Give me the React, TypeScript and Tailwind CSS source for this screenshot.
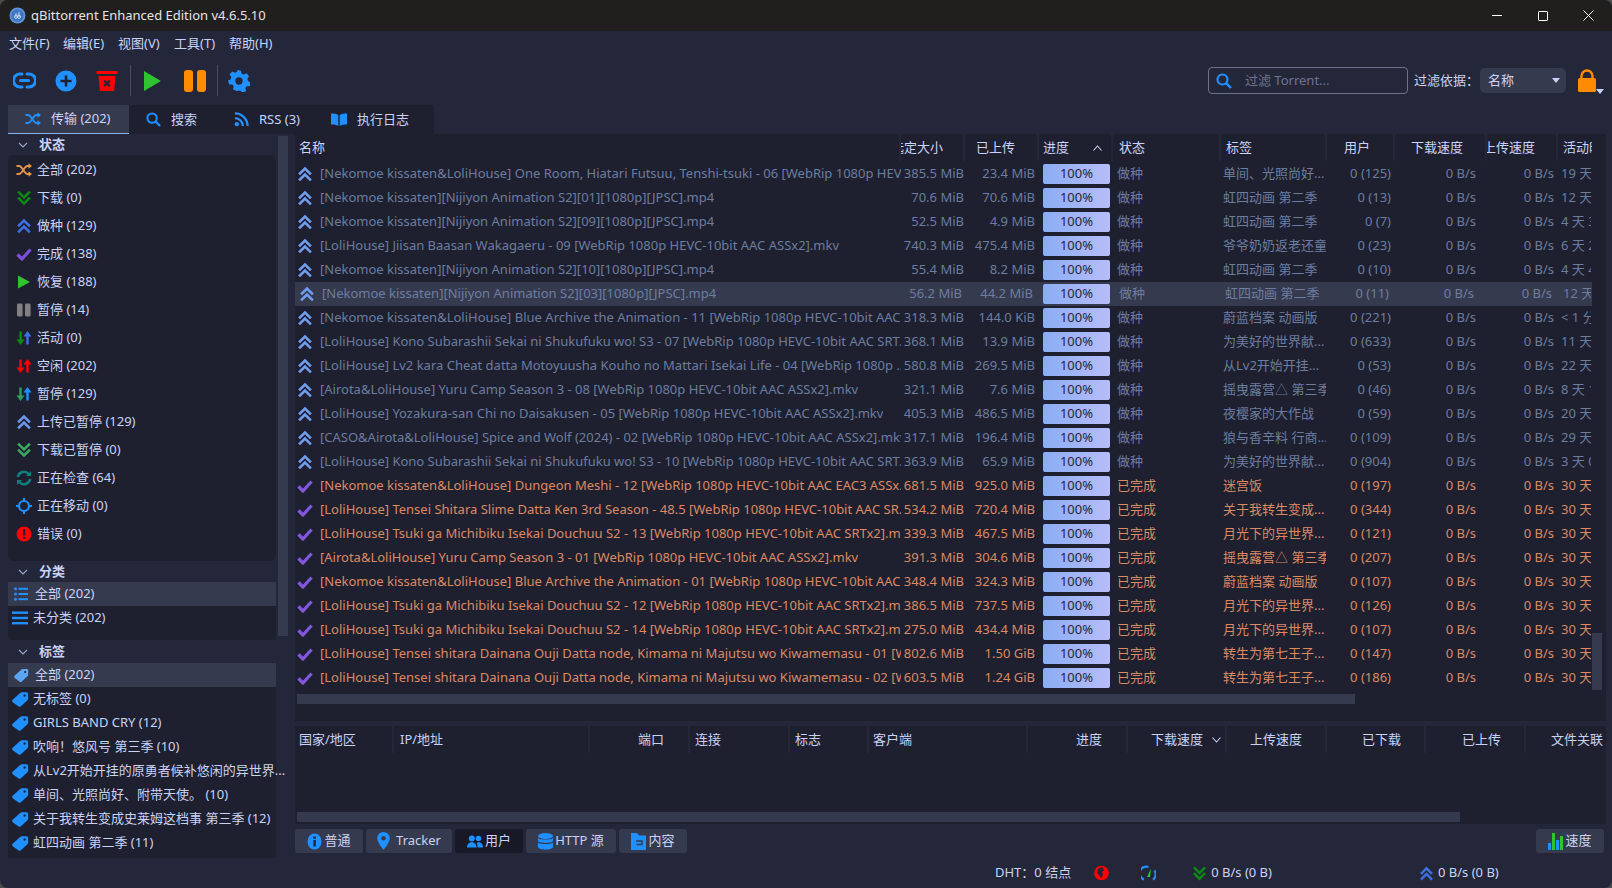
import React from "react";

const fontStack = "font-['Noto_Sans','Noto_Sans_CJK_SC',sans-serif]";

function DoubleChevron({ up, color, size = 16 }: { up?: boolean; color: string; size?: number }) {
  return (
    <svg width={size} height={size} viewBox="0 0 16 16" className="shrink-0">
      <g fill="none" stroke={color} strokeWidth="2.6" strokeLinecap="square" transform={up ? undefined : "rotate(180 8 8)"}>
        <path d="M3 7.5 8 2.5l5 5" />
        <path d="M3 13.5 8 8.5l5 5" />
      </g>
    </svg>
  );
}

function Check({ color = "#7c4fd6", size = 16 }: { color?: string; size?: number }) {
  return (
    <svg width={size} height={size} viewBox="0 0 16 16" className="shrink-0">
      <path d="M1.5 8.5 6 13 14.5 3.5" fill="none" stroke={color} strokeWidth="3.2" strokeLinejoin="round" />
    </svg>
  );
}

function Shuffle({ color, size = 16 }: { color: string; size?: number }) {
  return (
    <svg width={size} height={size} viewBox="0 0 16 16" className="shrink-0">
      <g fill="none" stroke={color} strokeWidth="1.8">
        <path d="M0.5 4h2.5c3.5 0 5 8 8.5 8H13" />
        <path d="M0.5 12h2.5c3.5 0 5-8 8.5-8H13" />
      </g>
      <path d="M12.5 1.2 16 4l-3.5 2.8zM12.5 9.2 16 12l-3.5 2.8z" fill={color} />
    </svg>
  );
}

function UpDown({ down, up }: { down: string; up: string }) {
  return (
    <svg width={16} height={16} viewBox="0 0 16 16" className="shrink-0">
      <path d="M4.5 1.5v11" stroke={down} strokeWidth="2.4" />
      <path d="M0.5 9.5h8L4.5 15z" fill={down} />
      <path d="M11.5 14.5V3.5" stroke={up} strokeWidth="2.4" />
      <path d="M7.5 6.5h8L11.5 1z" fill={up} />
    </svg>
  );
}

function Tag({ size = 17, color = "#2090ff" }: { size?: number; color?: string }) {
  return (
    <svg width={size} height={size} viewBox="0 0 17 17" className="shrink-0">
      <path d="M0.7 8.8 8.4 1.7a2 2 0 0 1 1.4-.5h4.7a1.6 1.6 0 0 1 1.6 1.6v5c0 .6-.2 1-.6 1.4l-6.6 6a2 2 0 0 1-2.7 0L.7 11.2a1.7 1.7 0 0 1 0-2.4z" fill={color} />
      <circle cx="12.6" cy="4.6" r="1.2" fill="#1e2030" />
    </svg>
  );
}

function ListIco({ wide }: { wide?: boolean }) {
  return (
    <svg width={wide ? 16 : 14} height={14} viewBox={wide ? "0 0 16 14" : "0 0 14 14"} className="shrink-0">
      {wide ? (
        <g fill="#2090ff">
          <rect x="0" y="0.5" width="16" height="2.4" />
          <rect x="0" y="5.8" width="16" height="2.4" />
          <rect x="0" y="11" width="16" height="2.4" />
        </g>
      ) : (
        <g fill="#2090ff">
          <circle cx="1.5" cy="1.8" r="1.5" />
          <circle cx="1.5" cy="7" r="1.5" />
          <circle cx="1.5" cy="12.2" r="1.5" />
          <rect x="4.5" y="0.8" width="9.5" height="2" />
          <rect x="4.5" y="6" width="9.5" height="2" />
          <rect x="4.5" y="11.2" width="9.5" height="2" />
        </g>
      )}
    </svg>
  );
}

const statusItems: [React.ReactNode, string][] = [
  [<Shuffle color="#e2954a" />, "全部 (202)"],
  [<DoubleChevron color="#0a8a12" />, "下载 (0)"],
  [<DoubleChevron up color="#3f6fe0" />, "做种 (129)"],
  [<Check />, "完成 (138)"],
  [
    <svg width={16} height={16} viewBox="0 0 16 16" className="shrink-0">
      <path d="M2 1.5 14 8 2 14.5z" fill="#2fc42f" />
    </svg>,
    "恢复 (188)",
  ],
  [
    <svg width={16} height={16} viewBox="0 0 16 16" className="shrink-0">
      <rect x="1" y="1.5" width="5.6" height="13" rx="1.4" fill="#808080" />
      <rect x="9" y="1.5" width="5.6" height="13" rx="1.4" fill="#808080" />
    </svg>,
    "暂停 (14)",
  ],
  [<UpDown down="#0a8a12" up="#3f6fe0" />, "活动 (0)"],
  [<UpDown down="#ff0000" up="#ff0000" />, "空闲 (202)"],
  [<UpDown down="#2e9e5a" up="#2090ff" />, "暂停 (129)"],
  [<DoubleChevron up color="#6f96e8" />, "上传已暂停 (129)"],
  [<DoubleChevron color="#3aa860" />, "下载已暂停 (0)"],
  [
    <svg width={16} height={16} viewBox="0 0 16 16" className="shrink-0">
      <g fill="none" stroke="#0e8080" strokeWidth="2.4">
        <path d="M1.8 7a6.3 6.3 0 0 1 11-3" />
        <path d="M14.2 9a6.3 6.3 0 0 1-11 3" />
      </g>
      <path d="M15 1v5h-5zM1 15v-5h5z" fill="#0e8080" />
    </svg>,
    "正在检查 (64)",
  ],
  [
    <svg width={16} height={16} viewBox="0 0 16 16" className="shrink-0">
      <circle cx="8" cy="8" r="5" fill="none" stroke="#2090ff" strokeWidth="2.2" />
      <path d="M8 0v3M8 13v3M0 8h3M13 8h3" stroke="#2090ff" strokeWidth="2" />
    </svg>,
    "正在移动 (0)",
  ],
  [
    <svg width={16} height={16} viewBox="0 0 16 16" className="shrink-0">
      <circle cx="8" cy="8" r="7.5" fill="#ff0000" />
      <rect x="7" y="3" width="2.2" height="6.5" fill="#1e2030" />
      <rect x="7" y="10.8" width="2.2" height="2.2" fill="#1e2030" />
    </svg>,
    "错误 (0)",
  ],
];

const tags = [
  "全部 (202)",
  "无标签 (0)",
  "GIRLS BAND CRY (12)",
  "吹响！悠风号 第三季 (10)",
  "从Lv2开始开挂的原勇者候补悠闲的异世界...",
  "单间、光照尚好、附带天使。 (10)",
  "关于我转生变成史莱姆这档事 第三季 (12)",
  "虹四动画 第二季 (11)",
];

type Row = [string, string, string, string, string, string];
const seed: Row[] = [
  ["[Nekomoe kissaten&LoliHouse] One Room, Hiatari Futsuu, Tenshi-tsuki - 06 [WebRip 1080p HEV...", "385.5 MiB", "23.4 MiB", "单间、光照尚好...", "0 (125)", "19 天 2"],
  ["[Nekomoe kissaten][Nijiyon Animation S2][01][1080p][JPSC].mp4", "70.6 MiB", "70.6 MiB", "虹四动画 第二季", "0 (13)", "12 天 3"],
  ["[Nekomoe kissaten][Nijiyon Animation S2][09][1080p][JPSC].mp4", "52.5 MiB", "4.9 MiB", "虹四动画 第二季", "0 (7)", "4 天 3"],
  ["[LoliHouse] Jiisan Baasan Wakagaeru - 09 [WebRip 1080p HEVC-10bit AAC ASSx2].mkv", "740.3 MiB", "475.4 MiB", "爷爷奶奶返老还童", "0 (23)", "6 天 2"],
  ["[Nekomoe kissaten][Nijiyon Animation S2][10][1080p][JPSC].mp4", "55.4 MiB", "8.2 MiB", "虹四动画 第二季", "0 (10)", "4 天 4"],
  ["[Nekomoe kissaten][Nijiyon Animation S2][03][1080p][JPSC].mp4", "56.2 MiB", "44.2 MiB", "虹四动画 第二季", "0 (11)", "12 天 2"],
  ["[Nekomoe kissaten&LoliHouse] Blue Archive the Animation - 11 [WebRip 1080p HEVC-10bit AAC ...", "318.3 MiB", "144.0 KiB", "蔚蓝档案 动画版", "0 (221)", "< 1 分"],
  ["[LoliHouse] Kono Subarashii Sekai ni Shukufuku wo! S3 - 07 [WebRip 1080p HEVC-10bit AAC SRT...", "368.1 MiB", "13.9 MiB", "为美好的世界献...", "0 (633)", "11 天 2"],
  ["[LoliHouse] Lv2 kara Cheat datta Motoyuusha Kouho no Mattari Isekai Life - 04 [WebRip 1080p ...", "580.8 MiB", "269.5 MiB", "从Lv2开始开挂...", "0 (53)", "22 天 2"],
  ["[Airota&LoliHouse] Yuru Camp Season 3 - 08 [WebRip 1080p HEVC-10bit AAC ASSx2].mkv", "321.1 MiB", "7.6 MiB", "摇曳露营△ 第三季", "0 (46)", "8 天 1"],
  ["[LoliHouse] Yozakura-san Chi no Daisakusen - 05 [WebRip 1080p HEVC-10bit AAC ASSx2].mkv", "405.3 MiB", "486.5 MiB", "夜樱家的大作战", "0 (59)", "20 天 3"],
  ["[CASO&Airota&LoliHouse] Spice and Wolf (2024) - 02 [WebRip 1080p HEVC-10bit AAC ASSx2].mkv", "317.1 MiB", "196.4 MiB", "狼与香辛料 行商...", "0 (109)", "29 天 2"],
  ["[LoliHouse] Kono Subarashii Sekai ni Shukufuku wo! S3 - 10 [WebRip 1080p HEVC-10bit AAC SRT...", "363.9 MiB", "65.9 MiB", "为美好的世界献...", "0 (904)", "3 天 0"],
];
const done: Row[] = [
  ["[Nekomoe kissaten&LoliHouse] Dungeon Meshi - 12 [WebRip 1080p HEVC-10bit AAC EAC3 ASSx...", "681.5 MiB", "925.0 MiB", "迷宫饭", "0 (197)", "30 天"],
  ["[LoliHouse] Tensei Shitara Slime Datta Ken 3rd Season - 48.5 [WebRip 1080p HEVC-10bit AAC SR...", "534.2 MiB", "720.4 MiB", "关于我转生变成...", "0 (344)", "30 天"],
  ["[LoliHouse] Tsuki ga Michibiku Isekai Douchuu S2 - 13 [WebRip 1080p HEVC-10bit AAC SRTx2].mkv", "339.3 MiB", "467.5 MiB", "月光下的异世界...", "0 (121)", "30 天"],
  ["[Airota&LoliHouse] Yuru Camp Season 3 - 01 [WebRip 1080p HEVC-10bit AAC ASSx2].mkv", "391.3 MiB", "304.6 MiB", "摇曳露营△ 第三季", "0 (207)", "30 天"],
  ["[Nekomoe kissaten&LoliHouse] Blue Archive the Animation - 01 [WebRip 1080p HEVC-10bit AAC ...", "348.4 MiB", "324.3 MiB", "蔚蓝档案 动画版", "0 (107)", "30 天"],
  ["[LoliHouse] Tsuki ga Michibiku Isekai Douchuu S2 - 12 [WebRip 1080p HEVC-10bit AAC SRTx2].mkv", "386.5 MiB", "737.5 MiB", "月光下的异世界...", "0 (126)", "30 天"],
  ["[LoliHouse] Tsuki ga Michibiku Isekai Douchuu S2 - 14 [WebRip 1080p HEVC-10bit AAC SRTx2].mkv", "275.0 MiB", "434.4 MiB", "月光下的异世界...", "0 (107)", "30 天"],
  ["[LoliHouse] Tensei shitara Dainana Ouji Datta node, Kimama ni Majutsu wo Kiwamemasu - 01 [W...", "802.6 MiB", "1.50 GiB", "转生为第七王子...", "0 (147)", "30 天"],
  ["[LoliHouse] Tensei shitara Dainana Ouji Datta node, Kimama ni Majutsu wo Kiwamemasu - 02 [W...", "603.5 MiB", "1.24 GiB", "转生为第七王子...", "0 (186)", "30 天"],
];

function TorrentRow({ row, kind, selected }: { row: Row; kind: "seed" | "done"; selected?: boolean }) {
  const color = kind === "seed" ? "text-[#6d7d9f]" : "text-[#dd8a63]";
  const state = kind === "seed" ? "做种" : "已完成";
  return (
    <div className={`flex h-6 shrink-0 items-center whitespace-nowrap ${color} ${selected ? "bg-[#363a4f]" : ""}`}>
      <div className={`flex w-[606px] shrink-0 items-center overflow-hidden ${selected ? "pl-[4px]" : "pl-[2px]"}`}>
        {kind === "seed" ? <DoubleChevron up color="#6f9cf0" /> : <Check color="#8257e0" />}
        <span className="ml-[7px] overflow-hidden">{row[0]}</span>
      </div>
      <div className={`w-[64px] shrink-0 text-right ${selected ? "pr-[3px]" : "pr-[1px]"}`}>{row[1]}</div>
      <div className={`w-[74px] shrink-0 text-right ${selected ? "pr-[6px]" : "pr-[4px]"}`}>{row[2]}</div>
      <div className="flex h-5 w-[67px] shrink-0 ml-[4px] items-center justify-center rounded-[2px] bg-gradient-to-r from-[#8aadf4] to-[#b7bdf8] text-[#24273a]">
        100%
      </div>
      <div className={`w-[110px] shrink-0 overflow-hidden ${selected ? "pl-[9px]" : "pl-[7px]"}`}>{state}</div>
      <div className={`w-[106px] shrink-0 overflow-hidden ${selected ? "pl-[5px]" : "pl-[3px]"}`}>{row[3]}</div>
      <div className={`w-[68px] shrink-0 text-right ${selected ? "pr-[5px]" : "pr-[3px]"}`}>{row[4]}</div>
      <div className={`w-[92px] shrink-0 text-right ${selected ? "pr-[12px]" : "pr-[10px]"}`}>0 B/s</div>
      <div className={`w-[71px] shrink-0 text-right ${selected ? "pr-[5px]" : "pr-[3px]"}`}>0 B/s</div>
      <div className={`w-[34px] shrink-0 overflow-hidden ${selected ? "pl-[6px]" : "pl-[4px]"}`}>{row[5]}</div>
    </div>
  );
}

function HeaderCell({ w, children, right, pad }: { w: string; children?: React.ReactNode; right?: boolean; pad: string }) {
  return (
    <div className={`flex h-full shrink-0 items-center overflow-hidden border-r-2 border-[#24273a] whitespace-nowrap ${w} ${right ? "justify-end" : ""} ${pad}`}>
      {children}
    </div>
  );
}

function BottomTab({ icon, label, active, w }: { icon: React.ReactNode; label: string; active?: boolean; w: string }) {
  return (
    <div className={`flex h-6 items-center justify-center gap-[2px] rounded-[3px] ${w} ${active ? "bg-[#181926]" : "bg-[#363a4f]"}`}>
      {icon}
      <span>{label}</span>
    </div>
  );
}

function TabBtn({ icon, label, active, w, pl }: { icon: React.ReactNode; label: string; active?: boolean; w: string; pl: string }) {
  return (
    <div className={`flex h-full items-center gap-[10px] ${w} ${pl} ${active ? "border-b border-[#8aadf4] bg-[#363a4f]" : ""}`}>
      {icon}
      <span>{label}</span>
    </div>
  );
}

function SectionHeader({ label, h }: { label: string; h: string }) {
  return (
    <div className={`flex items-center pl-[8px] font-bold ${h}`}>
      <svg width={14} height={14} viewBox="0 0 14 14" className="shrink-0">
        <path d="M3 5 7 9l4-4" fill="none" stroke="#9aa3c4" strokeWidth="1.2" />
      </svg>
      <span className="ml-[9px]">{label}</span>
    </div>
  );
}

export default function App() {
  return (
    <div className={`h-[888px] w-[1612px] overflow-hidden bg-[#4a4a4a] text-[13px] text-[#cad3f5] ${fontStack}`}>
      <div className="flex h-[888px] w-[1612px] flex-col overflow-hidden rounded-[8px] bg-[#24273a]">
        {/* title bar */}
        <div className="flex h-[31px] shrink-0 items-center bg-[#201f1e] pl-[9px] text-[#e4e4e4]">
          <svg width={17} height={17} viewBox="0 0 17 17" className="shrink-0">
            <circle cx="8.5" cy="8.5" r="8" fill="#5e93d8" />
            <circle cx="8.5" cy="8.5" r="6.2" fill="#3f74c0" />
            <path d="M7 6v4.4M7 8.2a1.6 1.6 0 1 1-.1 0M10 4.8v5.6M10 8.2a1.6 1.6 0 1 0 .1 0" stroke="#dfeaf8" fill="none" strokeWidth="0.9" />
          </svg>
          <span className="ml-[5px]">qBittorrent Enhanced Edition v4.6.5.10</span>
          <div className="ml-auto flex items-center">
            <div className="flex h-[31px] w-[46px] items-center justify-center">
              <div className="h-px w-[10px] bg-white" />
            </div>
            <div className="flex h-[31px] w-[46px] items-center justify-center">
              <div className="h-[10px] w-[10px] rounded-[1px] border border-white" />
            </div>
            <div className="flex h-[31px] w-[46px] items-center justify-center pr-[1px]">
              <svg width={11} height={11} viewBox="0 0 11 11">
                <path d="M.5.5l10 10M10.5.5l-10 10" stroke="#fff" strokeWidth="1" />
              </svg>
            </div>
          </div>
        </div>

        {/* menu */}
        <div className="flex h-[25px] shrink-0 items-center pl-[9px]">
          <span className="w-[54px]">文件(F)</span>
          <span className="w-[55px]">编辑(E)</span>
          <span className="w-[56px]">视图(V)</span>
          <span className="w-[55px]">工具(T)</span>
          <span>帮助(H)</span>
        </div>

        {/* toolbar */}
        <div className="flex h-[49px] shrink-0 items-center pl-[13px]">
          <svg width={23} height={23} viewBox="0 0 23 23" className="shrink-0">
            <path d="M9 5H7a6.5 6.5 0 0 0 0 13h2M14 5h2a6.5 6.5 0 0 1 0 13h-2" fill="none" stroke="#2090ff" strokeWidth="3" strokeLinecap="round" />
            <path d="M7.5 11.5h8" stroke="#2090ff" strokeWidth="3" strokeLinecap="round" />
          </svg>
          <svg width={22} height={22} viewBox="0 0 22 22" className="ml-[19px] shrink-0">
            <circle cx="11" cy="11" r="10.5" fill="#2090ff" />
            <path d="M11 5.5v11M5.5 11h11" stroke="#1e2030" strokeWidth="2.6" />
          </svg>
          <svg width={22} height={22} viewBox="0 0 22 22" className="ml-[19px] shrink-0">
            <rect x="0.5" y="1" width="21" height="3" fill="#ff0000" />
            <path d="M2.5 6h17l-1.4 15H3.9z" fill="#ff0000" />
            <path d="M8.2 10.5l5.6 5.6M13.8 10.5l-5.6 5.6" stroke="#24273a" strokeWidth="2.2" />
          </svg>
          <div className="ml-[12px] h-[31px] w-px bg-[#494d64]" />
          <svg width={19} height={22} viewBox="0 0 19 22" className="ml-[12px] shrink-0">
            <path d="M1 1l17 10L1 21z" fill="#2fc42f" />
          </svg>
          <div className="ml-[22px] flex shrink-0 gap-[4px]">
            <div className="h-[22px] w-[9px] rounded-[3px] bg-[#ff8c00]" />
            <div className="h-[22px] w-[9px] rounded-[3px] bg-[#ff8c00]" />
          </div>
          <div className="ml-[11px] h-[31px] w-px bg-[#494d64]" />
          <svg width={22} height={22} viewBox="0 0 24 24" className="ml-[10px] shrink-0">
            <path
              fill="#2090ff"
              fillRule="evenodd"
              d="M12 .5l2 .3 1 3.2 2.2 1 3-1.5 2.8 3.3-1.9 2.8.6 2.4 3 1.4-.8 4.2-3.4.2-1.5 1.9.8 3.2-3.9 2-2.3-2.4h-2.4L9.3 23l-3.9-2 .8-3.2-1.5-1.9-3.4-.2L0 11.5l3-1.4.6-2.4L1.7 4.9l2.8-3.3 3 1.5 2.2-1 1-3.2zM12 8a4 4 0 1 0 0 8 4 4 0 0 0 0-8z"
            />
          </svg>
          <div className="ml-auto flex items-center">
            <div className="flex h-[27px] w-[200px] items-center rounded-[4px] border border-[#6e738d] pl-[7px]">
              <svg width={16} height={16} viewBox="0 0 16 16" className="shrink-0">
                <circle cx="6.5" cy="6.5" r="5" fill="none" stroke="#2090ff" strokeWidth="2.2" />
                <path d="M10.3 10.3 15 15" stroke="#2090ff" strokeWidth="2.4" />
              </svg>
              <span className="ml-[13px] text-[#6e738d]">过滤 Torrent...</span>
            </div>
            <span className="ml-[6px]">过滤依据：</span>
            <div className="ml-[1px] flex h-[25px] w-[86px] items-center justify-between rounded-[5px] bg-[#363a4f] pl-[8px] pr-[6px]">
              <span>名称</span>
              <svg width={8} height={5} viewBox="0 0 8 5">
                <path d="M0 0h8L4 5z" fill="#cad3f5" />
              </svg>
            </div>
            <svg width={18} height={23} viewBox="0 0 18 23" className="ml-[12px] shrink-0">
              <path d="M3.5 10V7a5.5 5.5 0 0 1 11 0v3" fill="none" stroke="#ff8c00" strokeWidth="2.4" />
              <rect x="0" y="9" width="18" height="14" rx="1.5" fill="#ff8c00" />
            </svg>
            <svg width={8} height={5} viewBox="0 0 8 5" className="mt-[22px] mr-[8px] shrink-0">
              <path d="M0 0h8L4 5z" fill="#cad3f5" />
            </svg>
          </div>
        </div>

        {/* tabs */}
        <div className="ml-[8px] flex h-[29px] w-[426px] shrink-0 bg-[#1e2030]">
          <TabBtn active w="w-[121px]" pl="pl-[17px]" label="传输 (202)" icon={<Shuffle color="#2090ff" />} />
          <TabBtn
            w="w-[88px]"
            pl="pl-[17px]"
            label="搜索"
            icon={
              <svg width={15} height={15} viewBox="0 0 16 16" className="shrink-0">
                <circle cx="6.5" cy="6.5" r="5" fill="none" stroke="#2090ff" strokeWidth="2.2" />
                <path d="M10.3 10.3 15 15" stroke="#2090ff" strokeWidth="2.4" />
              </svg>
            }
          />
          <TabBtn
            w="w-[104px]"
            pl="pl-[17px]"
            label="RSS (3)"
            icon={
              <svg width={15} height={15} viewBox="0 0 16 16" className="shrink-0">
                <circle cx="3" cy="13" r="2.3" fill="#2090ff" />
                <path d="M1 6.5A8.5 8.5 0 0 1 9.5 15M1 1.5A13.5 13.5 0 0 1 14.5 15" fill="none" stroke="#2090ff" strokeWidth="2.4" />
              </svg>
            }
          />
          <TabBtn
            w="w-[113px]"
            pl="pl-[10px]"
            label="执行日志"
            icon={
              <svg width={16} height={13} viewBox="0 0 16 13" className="shrink-0">
                <path d="M0 .5c3 0 5.500.3 7.300 1.500V13C5.500 12 3 11.600 0 11.600zM16 .5c-3 0-5.500.3-7.300 1.500V13c1.800-1 4.300-1.400 7.300-1.400z" fill="#2090ff" />
              </svg>
            }
          />
        </div>

        {/* body */}
        <div className="flex min-h-0 flex-1">
          {/* sidebar */}
          <div className="ml-[8px] flex h-[724px] w-[268px] shrink-0 flex-col">
            <SectionHeader label="状态" h="h-[21px]" />
            <div className="h-[406px] shrink-0 rounded-[6px] bg-[#1e2030] pt-[1px]">
              {statusItems.map(([ic, label], i) => (
                <div key={i} className="flex h-7 items-center pl-[8px]">
                  {ic}
                  <span className="ml-[5px]">{label}</span>
                </div>
              ))}
            </div>
            <SectionHeader label="分类" h="h-[21px]" />
            <div className="h-[58px] shrink-0 rounded-b-[4px] bg-[#1e2030]">
              <div className="flex h-6 items-center bg-[#363a4f] pl-[6px]">
                <ListIco />
                <span className="ml-[7px]">全部 (202)</span>
              </div>
              <div className="flex h-6 items-center pl-[4px]">
                <ListIco wide />
                <span className="ml-[5px]">未分类 (202)</span>
              </div>
            </div>
            <SectionHeader label="标签" h="h-[23px]" />
            <div className="h-[195px] shrink-0 bg-[#1e2030]">
              {tags.map((t, i) => (
                <div key={i} className={`flex h-6 items-center whitespace-nowrap ${i === 0 ? "bg-[#363a4f] pl-[6px]" : "pl-[4px]"}`}>
                  <Tag size={i === 0 ? 15 : 17} color={i === 0 ? "#5aa6f5" : "#2090ff"} />
                  <span className={i === 0 ? "ml-[6px]" : "ml-[4px]"}>{t}</span>
                </div>
              ))}
            </div>
          </div>

          {/* sidebar scrollbar */}
          <div className="ml-[2px] mt-[2px] h-[500px] w-[10px] shrink-0 bg-[#363a4f]" />

          {/* main */}
          <div className="ml-[7px] flex w-[1311px] shrink-0 flex-col">
            <div className="h-[587px] shrink-0 bg-[#1e2030]">
              <div className="flex min-h-0">
                <div className="w-[1297px] shrink-0">
                  <div className="flex h-[27px] border-b-0 whitespace-nowrap">
                    <HeaderCell w="w-[606px]" pad="pl-[4px]">名称</HeaderCell>
                    <HeaderCell w="w-[64px]" right pad="pr-[20px]">选定大小</HeaderCell>
                    <HeaderCell w="w-[74px]" right pad="pr-[22px]">已上传</HeaderCell>
                    <HeaderCell w="w-[74px]" pad="pl-[4px]">
                      <span>进度</span>
                      <svg width={9} height={6} viewBox="0 0 9 6" className="ml-[24px] shrink-0">
                        <path d="M.5 5.500 4.500 1l4 4.500" fill="none" stroke="#cad3f5" strokeWidth="1.100" />
                      </svg>
                    </HeaderCell>
                    <HeaderCell w="w-[108px]" pad="pl-[6px]">状态</HeaderCell>
                    <HeaderCell w="w-[106px]" pad="pl-[5px]">标签</HeaderCell>
                    <HeaderCell w="w-[68px]" right pad="pr-[23px]">用户</HeaderCell>
                    <HeaderCell w="w-[92px]" right pad="pr-[22px]">下载速度</HeaderCell>
                    <HeaderCell w="w-[71px]" right pad="pr-[21px]">上传速度</HeaderCell>
                    <div className="flex h-full w-[34px] items-center overflow-hidden pl-[5px]">活动时间</div>
                  </div>
                  <div className="mt-px flex flex-col">
                    {seed.map((r, i) => (
                      <TorrentRow key={i} row={r} kind="seed" selected={i === 5} />
                    ))}
                    {done.map((r, i) => (
                      <TorrentRow key={i} row={r} kind="done" />
                    ))}
                  </div>
                </div>
                <div className="flex w-[14px] shrink-0 flex-col justify-end">
                  <div className="h-[57px] w-[10px] bg-[#363a4f]" />
                </div>
              </div>
              <div className="ml-[2px] mt-[4px] h-[10px] w-[1058px] bg-[#363a4f]" />
            </div>

            {/* peers table */}
            <div className="mt-[5px] h-[98px] shrink-0 bg-[#1e2030]">
              <div className="flex h-[27px] whitespace-nowrap">
                <HeaderCell w="w-[99px]" pad="pl-[4px]">国家/地区</HeaderCell>
                <HeaderCell w="w-[196px]" pad="pl-[6px]">IP/地址</HeaderCell>
                <HeaderCell w="w-[100px]" right pad="pr-[24px]">端口</HeaderCell>
                <HeaderCell w="w-[100px]" pad="pl-[5px]">连接</HeaderCell>
                <HeaderCell w="w-[79px]" pad="pl-[5px]">标志</HeaderCell>
                <HeaderCell w="w-[159px]" pad="pl-[4px]">客户端</HeaderCell>
                <HeaderCell w="w-[100px]" right pad="pr-[24px]">进度</HeaderCell>
                <HeaderCell w="w-[99px]" right pad="pr-[4px]">
                  <span>下载速度</span>
                  <svg width={9} height={6} viewBox="0 0 9 6" className="ml-[9px] shrink-0">
                    <path d="M.5.5 4.500 5l4-4.500" fill="none" stroke="#cad3f5" strokeWidth="1.100" />
                  </svg>
                </HeaderCell>
                <HeaderCell w="w-[100px]" right pad="pr-[23px]">上传速度</HeaderCell>
                <HeaderCell w="w-[99px]" right pad="pr-[23px]">已下载</HeaderCell>
                <HeaderCell w="w-[100px]" right pad="pr-[23px]">已上传</HeaderCell>
                <div className="flex h-full flex-1 items-center justify-end pr-[3px]">文件关联</div>
              </div>
              <div className="ml-[2px] mt-[59px] h-[10px] w-[1163px] bg-[#363a4f]" />
            </div>

            {/* bottom tabs */}
            <div className="mt-[5px] flex shrink-0 gap-[3px]">
              <BottomTab
                w="w-[68px]"
                label="普通"
                icon={
                  <svg width={15} height={17} viewBox="0 0 15 17" className="shrink-0">
                    <ellipse cx="7.500" cy="8.500" rx="7" ry="8" fill="#2090ff" />
                    <rect x="6.300" y="7" width="2.600" height="6.500" fill="#24273a" />
                    <rect x="6.300" y="3.500" width="2.600" height="2.200" fill="#24273a" />
                  </svg>
                }
              />
              <BottomTab
                w="w-[86px]"
                label="Tracker"
                icon={
                  <svg width={13} height={18} viewBox="0 0 13 18" className="mr-[4px] shrink-0">
                    <path d="M6.500 0A6.300 6.300 0 0 0 .2 6.300C.2 10.500 6.500 18 6.500 18s6.300-7.500 6.300-11.700A6.300 6.300 0 0 0 6.500 0z" fill="#2090ff" />
                    <circle cx="6.500" cy="6.200" r="2.300" fill="#363a4f" />
                  </svg>
                }
              />
              <BottomTab
                active
                w="w-[68px]"
                label="用户"
                icon={
                  <svg width={16} height={13} viewBox="0 0 16 13" className="shrink-0">
                    <circle cx="4.800" cy="3.500" r="3" fill="#2090ff" />
                    <circle cx="11.500" cy="3.500" r="2.700" fill="#2090ff" />
                    <path d="M0 12.500c0-7 9.500-7 9.500 0zM10.500 12.500H16c0-5-4-6-6.500-4.700 1 1.100 1 3 1 4.700z" fill="#2090ff" />
                  </svg>
                }
              />
              <BottomTab
                w="w-[90px]"
                label="HTTP 源"
                icon={
                  <svg width={15} height={17} viewBox="0 0 15 17" className="shrink-0">
                    <g fill="#2090ff">
                      <ellipse cx="7.500" cy="3" rx="7.500" ry="3" />
                      <path d="M0 5c1 2 14 2 15 0v3c-1 2.500-14 2.500-15 0zM0 9.500c1 2 14 2 15 0v4.500c-1 3.500-14 3.500-15 0z" />
                    </g>
                  </svg>
                }
              />
              <BottomTab
                w="w-[68px]"
                label="内容"
                icon={
                  <svg width={15} height={17} viewBox="0 0 15 17" className="shrink-0">
                    <path d="M0 0h6l2 2.500h7V17H0z" fill="#2090ff" />
                    <path d="M5 8h6v3.500H5.500" fill="none" stroke="#363a4f" strokeWidth="1.500" />
                  </svg>
                }
              />
              <div className="ml-auto mr-[2px] flex h-6 w-[68px] items-center justify-center gap-[2px] rounded-[3px] bg-[#363a4f]">
                <svg width={15} height={17} viewBox="0 0 15 17" className="shrink-0">
                  <rect x="0" y="10" width="3" height="7" fill="#2090ff" />
                  <rect x="4" y="0" width="3" height="17" fill="#2fc42f" />
                  <rect x="8" y="7" width="3" height="10" fill="#2090ff" />
                  <rect x="12" y="3" width="3" height="14" fill="#2fc42f" />
                </svg>
                <span>速度</span>
              </div>
            </div>

            {/* status bar */}
            <div className="mt-[8px] flex h-[24px] shrink-0 items-center whitespace-nowrap pl-[700px]">
              <span>DHT：0 结点</span>
              <svg width={15} height={16} viewBox="0 0 15 16" className="ml-[23px] shrink-0">
                <circle cx="7.500" cy="8" r="7.300" fill="#ff0000" />
                <path d="M4 4l4-2 2 3-2 2 1 3-2 3-2-3-2-2z" fill="#24273a" />
              </svg>
              <svg width={15} height={16} viewBox="0 0 15 16" className="ml-[32px] shrink-0">
                <path d="M3 14.500A6.500 6.500 0 0 1 7.500 2M12 14.500A6.500 6.500 0 0 0 13.500 5.500" fill="none" stroke="#2090ff" strokeWidth="2.200" />
                <path d="M6 12 10 3.500 9 12z" fill="#2fc42f" />
              </svg>
              <div className="ml-[36px]">
                <DoubleChevron color="#0a8a12" size={15} />
              </div>
              <span className="ml-[4px]">0 B/s (0 B)</span>
              <div className="ml-[147px]">
                <DoubleChevron up color="#3f6fe0" size={15} />
              </div>
              <span className="ml-[4px]">0 B/s (0 B)</span>
            </div>
          </div>
        </div>
      </div>
    </div>
  );
}
